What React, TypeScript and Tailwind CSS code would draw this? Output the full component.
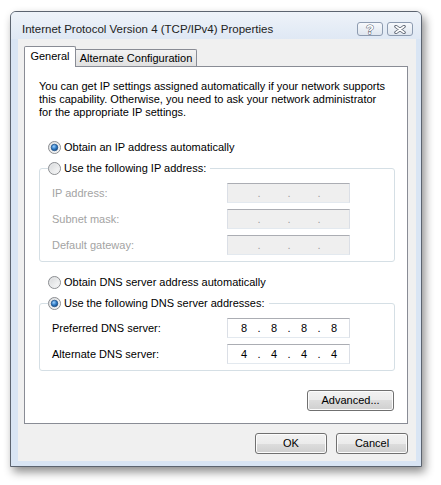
import React, { useId } from 'react';

const Radio = ({ checked }: { checked?: boolean }) => {
  const id = useId();
  return (
    <svg width="13" height="13" viewBox="0 0 13 13" className="shrink-0">
      <defs>
        <linearGradient id={`${id}o`} x1="0" y1="0" x2="1" y2="1">
          <stop offset="0" stopColor="#d2d4d6" />
          <stop offset="1" stopColor="#ffffff" />
        </linearGradient>
        <radialGradient id={`${id}d`} cx="0.4" cy="0.35" r="0.7">
          <stop offset="0" stopColor="#9fd3ff" />
          <stop offset="0.55" stopColor="#2f7ac4" />
          <stop offset="1" stopColor="#16457a" />
        </radialGradient>
      </defs>
      <circle cx="6.5" cy="6.5" r="6" fill={`url(#${id}o)`} stroke="#8b8d90" strokeWidth="1" />
      <circle cx="6.5" cy="6.5" r="4.6" fill="none" stroke="#e9eaeb" strokeWidth="0.8" />
      {checked && <circle cx="6.5" cy="6.5" r="3.3" fill={`url(#${id}d)`} stroke="#1d4f86" strokeWidth="0.7" />}
    </svg>
  );
};

const IpBox = ({ parts, disabled }: { parts: string[]; disabled?: boolean }) => (
  <div
    className={`flex h-[20px] w-[123px] items-center border border-t-[#abadb3] border-x-[#dbdfe6] border-b-[#e3e9ef] pl-[3px] ${
      disabled ? 'bg-[#efefef] text-[#a0a0a0]' : 'bg-white text-black'
    }`}
  >
    {parts.map((p, i) => (
      <React.Fragment key={i}>
        <span className="w-[26px] text-center">{p}</span>
        {i < 3 && <span className="w-[4px] text-center">.</span>}
      </React.Fragment>
    ))}
  </div>
);

const Row = ({ label, parts, disabled }: { label: string; parts: string[]; disabled?: boolean }) => (
  <div className="flex items-center pl-[12px]">
    <span className={`w-[175px] ${disabled ? 'text-[#a3a3a3]' : 'text-black'}`}>{label}</span>
    <IpBox parts={parts} disabled={disabled} />
  </div>
);

const Button = ({ label, className = '' }: { label: string; className?: string }) => (
  <button
    className={`flex h-[21px] shrink-0 items-center justify-center rounded-[3px] border border-[#707070] bg-[linear-gradient(#f2f2f2_0%,#ebebeb_50%,#dddddd_50%,#cfcfcf_100%)] text-black shadow-[inset_0_0_0_1px_#fcfcfc] ${className}`}
  >
    {label}
  </button>
);

export default function App() {
  const empty = ['', '', '', ''];
  return (
    <div className="h-[485px] w-[441px] whitespace-nowrap bg-white pl-[10px] pt-[11px] font-['Liberation_Sans',Arial,sans-serif] text-[11px] leading-[15px]">
      <div className="flex h-[456px] w-[412px] flex-col rounded-t-[6px] border border-[#5c6470] bg-[#d9e5f4] shadow-[3px_5px_10px_rgba(0,0,0,0.45)]">
        {/* title bar */}
        <div className="flex h-[27px] shrink-0 items-start rounded-t-[5px] bg-[linear-gradient(#eef3f9,#dfe8f4)] pl-[11px] pr-[8px]">
          <span className="mt-[10px] text-[11.5px] text-[#222]">Internet Protocol Version 4 (TCP/IPv4) Properties</span>
          <div className="ml-auto mt-[10px] flex gap-[4px]">
            <div className="flex h-[14px] w-[26px] items-center justify-center rounded-[3px] border border-[#8d9bb0] bg-[linear-gradient(#f7f9fc,#dfe6ef)]">
              <span className="text-[13px] font-bold leading-none text-white [-webkit-text-stroke:1px_#5a6270] [paint-order:stroke_fill]">?</span>
            </div>
            <div className="flex h-[14px] w-[26px] items-center justify-center rounded-[3px] border border-[#8d9bb0] bg-[linear-gradient(#f7f9fc,#dfe6ef)]">
              <svg width="14" height="9" viewBox="0 0 14 9">
                <path d="M3 1.5 L11 7.5 M11 1.5 L3 7.5" stroke="#5a6270" strokeWidth="3.4" strokeLinecap="round" />
                <path d="M3 1.5 L11 7.5 M11 1.5 L3 7.5" stroke="#ffffff" strokeWidth="1.6" strokeLinecap="round" />
              </svg>
            </div>
          </div>
        </div>

        {/* client */}
        <div className="mb-[5px] ml-[7px] flex w-[398px] flex-1 flex-col bg-[#f0f0f0] pl-[6px] pr-[8px] pt-[7px]">
          <div className="flex items-end">
            <div className="relative z-10 -mb-px flex h-[21px] w-[52px] items-center justify-center rounded-t-[2px] border border-b-0 border-[#898c95] bg-white pb-[1px]">
              General
            </div>
            <div className="flex h-[17px] w-[121px] items-center justify-center rounded-tr-[2px] border-r border-t border-[#898c95] bg-[linear-gradient(#f3f3f3,#e0e0e0)]">
              Alternate Configuration
            </div>
          </div>

          <div className="flex h-[358px] shrink-0 flex-col border border-[#898c95] bg-white pl-[14px] pr-[12px] text-black">
            <p className="mt-[13px] leading-[13px]">
              You can get IP settings assigned automatically if your network supports
              <br />
              this capability. Otherwise, you need to ask your network administrator
              <br />
              for the appropriate IP settings.
            </p>

            <label className="ml-[9px] mt-[21px] flex items-center gap-[3px]">
              <Radio checked />
              <span>Obtain an IP address automatically</span>
            </label>

            <fieldset className="mt-[6px] flex flex-col gap-[6px] rounded-[3px] border border-[#d5dfe5] pb-[6px]">
              <legend className="ml-[8px] flex items-center gap-[3px] pr-[4px]">
                <Radio />
                <span>Use the following IP address:</span>
              </legend>
              <div className="mt-[1px]" />
              <Row label="IP address:" parts={empty} disabled />
              <Row label="Subnet mask:" parts={empty} disabled />
              <Row label="Default gateway:" parts={empty} disabled />
            </fieldset>

            <label className="ml-[9px] mt-[13px] flex items-center gap-[3px]">
              <Radio />
              <span>Obtain DNS server address automatically</span>
            </label>

            <fieldset className="mt-[6px] flex flex-col gap-[6px] rounded-[3px] border border-[#d5dfe5] pb-[6px]">
              <legend className="ml-[8px] flex items-center gap-[3px] pr-[4px]">
                <Radio checked />
                <span>Use the following DNS server addresses:</span>
              </legend>
              <div className="mt-[1px]" />
              <Row label="Preferred DNS server:" parts={['8', '8', '8', '8']} />
              <Row label="Alternate DNS server:" parts={['4', '4', '4', '4']} />
            </fieldset>

            <Button label="Advanced..." className="mr-[1px] mt-[19px] w-[87px] self-end" />
          </div>

          <div className="mt-[9px] flex justify-end gap-[9px]">
            <Button label="OK" className="w-[72px]" />
            <Button label="Cancel" className="w-[72px]" />
          </div>
        </div>
      </div>
    </div>
  );
}
